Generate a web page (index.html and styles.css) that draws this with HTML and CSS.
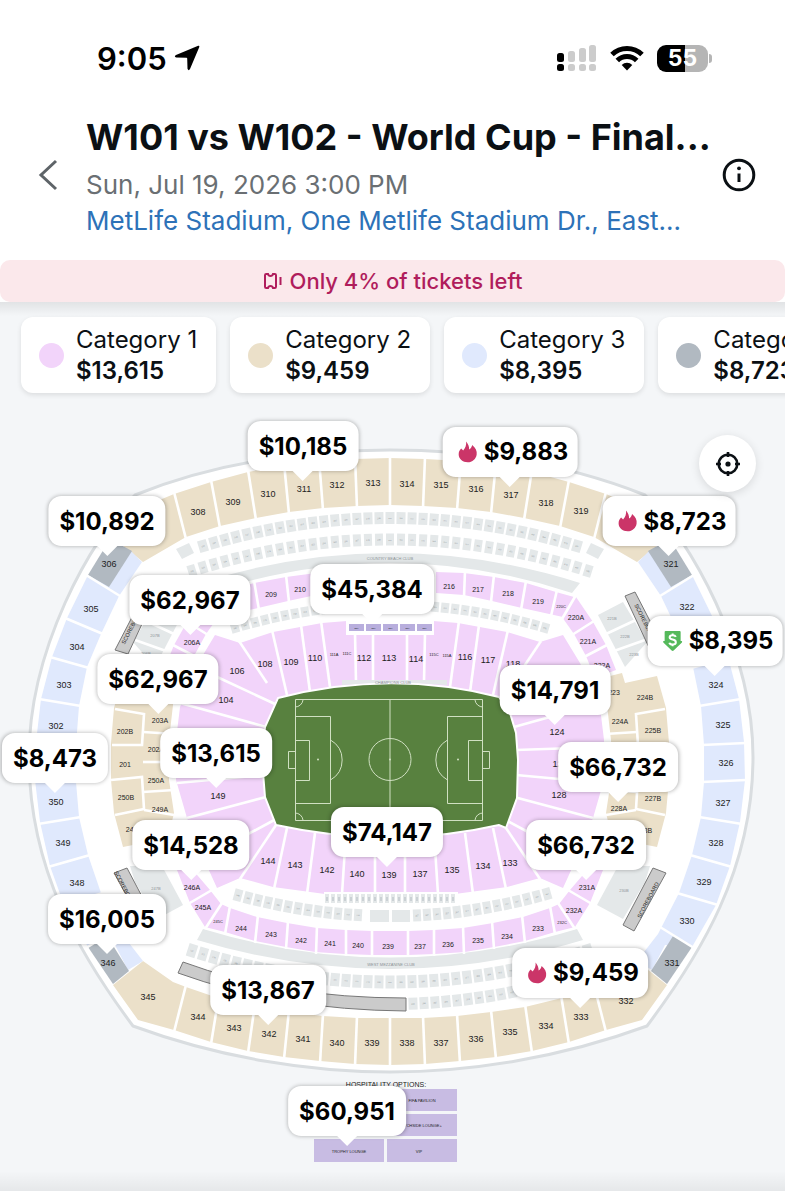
FILE: index.html
```html
<!DOCTYPE html>
<html lang="en">
<head>
  <meta charset="UTF-8">
  <meta name="viewport" content="width=device-width, initial-scale=1.0">
  <title>W101 vs W102 - World Cup - Final</title>
  <link rel="stylesheet" href="styles.css">
</head>
<body>

<div class="status-bar">
  <div class="status-time">
    <span>9:05</span>
    <svg class="icon-location" viewBox="0 0 26 26"><path d="M24.2 0.8 Q25.8 0.4 25.2 2.2 L16 24 Q14.6 26.4 13.5 23.8 L13.2 13.5 Q13.2 12.8 12.5 12.8 L2.2 12.5 Q-0.4 11.4 2 10 L24.2 0.8Z"/></svg>
  </div>
  <div class="status-icons">
    <svg class="icon-signal" viewBox="0 0 40 28">
      <g class="signal-on"><rect x="0" y="9" width="7" height="9" rx="2.5"/><rect x="0" y="20" width="7" height="7" rx="2.5"/></g>
      <g class="signal-off">
        <rect x="11" y="7" width="7" height="11" rx="2.5"/><rect x="11" y="20" width="7" height="7" rx="2.5"/>
        <rect x="22" y="4" width="7" height="14" rx="2.5"/><rect x="22" y="20" width="7" height="7" rx="2.5"/>
        <rect x="32" y="1" width="7" height="17" rx="2.5"/><rect x="32" y="20" width="7" height="7" rx="2.5"/>
      </g>
    </svg>
    <svg class="icon-wifi" viewBox="0 0 34 26">
      <path d="M2 9.5 A21.5 21.5 0 0 1 32 9.5"/>
      <path d="M7.3 15.5 A13.7 13.7 0 0 1 26.7 15.5"/>
      <path class="wifi-dot" d="M17 25.5 L11.7 20 A7.6 7.6 0 0 1 22.3 20Z"/>
    </svg>
    <div class="battery"><span>55</span></div>
  </div>
</div>

<header class="event-header">
  <button class="back-button" aria-label="Back">
    <svg viewBox="0 0 20 32"><path d="M18 2 L3 16 L18 30"/></svg>
  </button>
  <div class="event-info">
    <h1>W101 vs W102 - World Cup - Final...</h1>
    <p class="event-date">Sun, Jul 19, 2026 3:00 PM</p>
    <a class="event-venue" href="#">MetLife Stadium, One Metlife Stadium Dr., East...</a>
  </div>
  <button class="info-button" aria-label="Event info">
    <svg viewBox="0 0 34 34"><circle cx="17" cy="17" r="14.8"/><path d="M17 15.5 V24"/><circle class="info-dot" cx="17" cy="10.3" r="1.9"/></svg>
  </button>
</header>

<div class="banner">
  <svg class="icon-ticket" viewBox="0 0 20 20"><path d="M5 3 H3.2 Q2 3 2 4.2 V15.8 Q2 17 3.2 17 H5 Q5.5 15 7.5 15 T10 17 H11.8 Q13 17 13 15.8 V4.2 Q13 3 11.8 3 H10 Q9.5 5 7.5 5 T5 3Z"/><path d="M17.5 6 V14"/></svg>
  <span>Only 4% of tickets left</span>
</div>

<main>
  <div class="categories">
    <button class="category"><span class="dot dot-1"></span><span class="category-text">Category 1<b>$13,615</b></span></button>
    <button class="category"><span class="dot dot-2"></span><span class="category-text">Category 2<b>$9,459</b></span></button>
    <button class="category"><span class="dot dot-3"></span><span class="category-text">Category 3<b>$8,395</b></span></button>
    <button class="category"><span class="dot dot-4"></span><span class="category-text">Category 4<b>$8,723</b></span></button>
  </div>

  <div class="map">
    <svg class="seat-map" id="seat-map" viewBox="0 408 785 783"></svg>
    <div id="pins"></div>
    <button class="locate-button" aria-label="Recenter map">
      <svg viewBox="0 0 26 26"><circle cx="13" cy="13" r="9.3"/><path d="M13 1 V6 M13 20 V25 M1 13 H6 M20 13 H25"/><circle class="locate-dot" cx="13" cy="13" r="2.6"/></svg>
    </button>
  </div>
</main>

<div class="sheet"></div>

<script src="map.js"></script>
</body>
</html>
```
FILE: styles.css
```css
* {
  box-sizing: border-box;
}

body {
  margin: 0;
  min-height: 100vh;
  display: flex;
  flex-direction: column;
  background: #fff;
  color: #0b1014;
  font-family: Inter, "Liberation Sans", sans-serif;
  overflow-x: hidden;
}

button {
  border: 0;
  padding: 0;
  background: none;
  color: inherit;
  font: inherit;
  cursor: pointer;
}

svg {
  display: block;
}

/* Status bar */
.status-bar {
  display: flex;
  justify-content: space-between;
  align-items: center;
  padding: 38px 77px 0 97px;
  height: 78px;
  color: #000;
}

.status-time {
  display: flex;
  align-items: center;
  gap: 7px;
  font-size: 31px;
  font-weight: 600;
}

.icon-location {
  width: 26px;
  height: 26px;
}

.status-icons {
  display: flex;
  align-items: center;
  gap: 13px;
}

.icon-signal {
  width: 40px;
  height: 28px;
}

.signal-off {
  fill: #cccccc;
}

.icon-wifi {
  width: 34px;
  height: 26px;
  fill: none;
  stroke: #000;
  stroke-width: 5;
}

.icon-wifi .wifi-dot {
  fill: #000;
  stroke: none;
}

.battery {
  position: relative;
  width: 51px;
  height: 27px;
  border-radius: 9px;
  background: linear-gradient(to right, #000 55%, #b5b5b5 55%);
  color: #fff;
  font-size: 23px;
  font-weight: 700;
  line-height: 27px;
  text-align: center;
}

.battery::after {
  content: "";
  position: absolute;
  right: -4px;
  top: 9px;
  width: 3px;
  height: 9px;
  border-radius: 0 3px 3px 0;
  background: #b5b5b5;
}

/* Event header */
.event-header {
  display: flex;
  align-items: center;
  padding: 37px 29px 21px 38px;
}

.back-button,
.info-button {
  flex: none;
  padding-bottom: 4px;
}

.back-button {
  width: 48px;
}

.back-button svg {
  width: 20px;
  height: 32px;
  fill: none;
  stroke: #5e6468;
  stroke-width: 3;
}

.event-info {
  flex: 1;
  min-width: 0;
  white-space: nowrap;
}

.event-info h1 {
  margin: 0 0 8px;
  font-size: 36px;
  line-height: 44px;
  font-weight: 700;
}

.event-date {
  margin: 0;
  font-size: 26px;
  line-height: 36px;
  color: #6a6f73;
}

.event-venue {
  display: block;
  font-size: 26px;
  line-height: 36px;
  color: #2d72b8;
  text-decoration: none;
}

.info-button svg {
  width: 34px;
  height: 34px;
  fill: none;
  stroke: #0b1014;
  stroke-width: 3;
}

.info-button .info-dot {
  fill: #0b1014;
  stroke: none;
}

/* Tickets left banner */
.banner {
  display: flex;
  justify-content: center;
  align-items: center;
  gap: 7px;
  height: 42px;
  border-radius: 10px;
  background: #fbe8eb;
  color: #b01d5c;
  font-size: 22px;
  font-weight: 500;
}

.icon-ticket {
  width: 20px;
  height: 20px;
  fill: none;
  stroke: #b01d5c;
  stroke-width: 2;
}

main {
  background:
    linear-gradient(rgba(0, 0, 0, 0.08), rgba(0, 0, 0, 0)) top / 100% 14px no-repeat,
    linear-gradient(rgba(0, 0, 0, 0), rgba(0, 0, 0, 0.06)) bottom / 100% 20px no-repeat,
    #f4f6f8;
}

/* Category chips */
.categories {
  display: flex;
  gap: 14px;
  padding: 15px 0 15px 21px;
  overflow: hidden;
}

.category {
  flex: none;
  display: flex;
  align-items: center;
  gap: 12px;
  height: 76px;
  padding: 0 19px 0 18px;
  border-radius: 12px;
  background: #fff;
  box-shadow: 0 2px 5px rgba(0, 0, 0, 0.1);
  font-size: 24px;
  line-height: 31px;
  text-align: left;
}

.category b {
  display: block;
  font-weight: 600;
}

.dot {
  width: 25px;
  height: 25px;
  border-radius: 50%;
}

.dot-1 { background: #f2d4fa; }
.dot-2 { background: #ebe0c9; }
.dot-3 { background: #e0e9fd; }
.dot-4 { background: #b1b9c1; }

/* Stadium map */
.map {
  position: relative;
}

.seat-map {
  width: 100%;
  font-family: "Liberation Sans", Arial, sans-serif;
}

.outline { fill: #fff; stroke: #d9dde0; stroke-width: 3; }
.tan { fill: #ebe0c9; }
.pink { fill: #f2d4fa; }
.blue { fill: #e0e9fd; }
.slate { fill: #b1b9c1; }
.suite { fill: #e4e8e9; }
.violet { fill: #c8bce3; }
.box { fill: #b8aedd; }
.white { fill: #fff; }
.board { fill: #cbcbcb; stroke: #777; stroke-width: 1; }
.aisle { fill: none; stroke: #fff; stroke-width: 2.6; }
.grass { fill: #58813f; stroke: #fff; stroke-width: 2; }
.chalk { fill: none; stroke: #d0e0c2; stroke-width: 1; }
.spot { fill: #d0e0c2; }

.seat-map text {
  fill: #222;
  text-anchor: middle;
}

.label-l { font-size: 9px; }
.label-m { font-size: 7px; }
.label-s { font-size: 4px; }
.label-xs { font-size: 2px; }
.label-l, .label-m, .label-s { dominant-baseline: central; }

.seat-map .faint {
  fill: #8c9296;
}

/* Price pins, anchored at the tip */
.pin {
  position: absolute;
  transform: translate(-50%, -100%);
  display: flex;
  align-items: center;
  gap: 6px;
  height: 50px;
  margin-top: -10px;
  padding: 0 11px;
  border-radius: 13px;
  background: #fff;
  box-shadow: 0 0 4px rgba(0, 0, 0, 0.3);
  color: #000;
  font-size: 24px;
  font-weight: 700;
}

.pin-icon {
  padding: 0 9px 0 15px;
}

.pin::after {
  content: "";
  position: absolute;
  left: 50%;
  top: 100%;
  margin: -1px 0 0 -11px;
  border: 11px solid transparent;
  border-top-color: #fff;
  border-bottom: 0;
}

.pin svg {
  width: 20px;
  height: 22px;
}

.flame { fill: #cb3568; }
.deal { fill: #55b95b; }
.deal-mark { fill: none; stroke: #fff; stroke-width: 2; }

.locate-button {
  position: absolute;
  top: 27px;
  right: 29px;
  width: 57px;
  height: 57px;
  display: flex;
  justify-content: center;
  align-items: center;
  border-radius: 50%;
  background: #fff;
  box-shadow: 0 2px 10px rgba(0, 0, 0, 0.12);
}

.locate-button svg {
  width: 26px;
  height: 26px;
  fill: none;
  stroke: #0b1014;
  stroke-width: 2.6;
}

.locate-button .locate-dot {
  fill: #0b1014;
  stroke: none;
}

.sheet {
  flex: 1;
  min-height: 9px;
  border-radius: 14px 14px 0 0;
  background: #fff;
}
```
FILE: map.js
```js
const CENTER = 390;
const out = [];

const poly = (cls, pts) => out.push(`<polygon class="${cls}" points="${pts}"/>`);
const path = (cls, d) => out.push(`<path class="${cls}" d="${d}"/>`);
const flip = pts => pts.split(' ').map(p => {
  const [x, y] = p.split(',');
  return `${CENTER * 2 - x},${y}`;
}).join(' ');

// draw the shape and its mirror image on the other side of the halfway line
const both = (cls, pts) => {
  poly(cls, pts);
  poly(cls, flip(pts));
};
const aisle = pts => out.push(`<polyline class="aisle" points="${pts}"/>`);
const aisles = pts => {
  aisle(pts);
  aisle(flip(pts));
};

// curved row of small suites
function suites(y0, bend, from, to, step, w, h) {
  for (let dx = from; dx <= to; dx += step) {
    const y = y0 + bend * dx * dx;
    const deg = Math.atan(2 * bend * dx) * 180 / Math.PI;
    out.push(`<g transform="translate(${CENTER + dx} ${y}) rotate(${deg})">
      <rect class="suite" x="${-w / 2}" y="${-h / 2}" width="${w}" height="${h}"/>
      <text class="label-xs faint" y="1">${100 + Math.round(dx + 200)}</text></g>`);
  }
}

// stadium shell
path('outline', 'M135,495 C215,463 305,450 390,450 S565,463 645,495 C690,540 753,650 753,757 C753,870 700,955 647,1026 C560,1058 470,1072 390,1072 S220,1058 133,1026 C80,955 29,870 29,757 C29,650 90,540 135,495Z');

// 300 level
poly('tan', '122,545 150,504 174,494 211,482 248,472 284,465 319,461 355,459 390,458 425,459 461,461 496,465 532,472 569,482 606,494 630,504 658,545 637,562 594,537 560,526 524,518 491,512 457,508 423,506 390,505 357,506 323,508 289,512 256,518 220,526 186,537 143,562');
poly('tan', '113,985 143,961 173,982 186,987 218,998 255,1007 289,1012 323,1016 357,1018 390,1018 423,1018 457,1016 491,1012 525,1007 562,998 594,987 607,982 637,961 667,985 642,1020 606,1030 569,1042 532,1051 496,1057 460,1061 425,1064 390,1065 355,1064 320,1061 284,1057 248,1051 211,1042 174,1030 138,1020');
['174,492 186,539', '211,480 220,528', '248,470 256,520', '284,463 289,514', '319,459 323,510', '355,457 357,508',
 '186,985 174,1032', '219,995 211,1044', '255,1004 248,1053', '289,1010 284,1059', '323,1014 320,1063', '357,1016 355,1066'].forEach(aisles);
aisle('390,456 390,507');
aisle('390,1016 390,1067');

both('blue', '88,575 67,618 52,657 41,699 36,742 35,780 40,822 50,866 64,905 88,947 115,945 128,970 143,961 122,934 101,893 88,855 79,817 76,782 76,745 79,706 87,667 101,634 119,596 142,562 131,551 109,586');
both('slate', '88,575 109,587 132,551 110,539');
both('slate', '88,947 113,984 129,971 107,936');
['86,575 120,596', '65,618 103,634', '50,657 89,668', '39,699 81,706', '34,743 78,745', '34,780 78,782', '38,824 81,817', '48,867 90,855', '62,905 103,893', '86,948 120,927'].forEach(aisles);

// suites and clubs, north side
suites(518, 0.0008, -187, 187, 11, 9, 12);
suites(539.5, 0.0008, -198, 198, 11, 8, 12);
both('suite', '176,549 189,543 194,553 182,559');
path('suite', 'M200,583 Q390,523 580,583 L572,593 Q390,533 208,593Z');
suites(605, 0.00095, -155, -45, 10, 8, 10);
suites(605, 0.00095, 45, 155, 10, 8, 10);

// suites and clubs, south side
suites(916, -0.0009, -152, -32, 10, 8, 12);
suites(916, -0.0009, 27, 157, 10, 8, 12);
out.push('<rect class="suite" x="370" y="910" width="19" height="12"/><rect class="suite" x="392" y="910" width="18" height="12"/>');
path('suite', 'M203,929 Q390,986 577,929 L583,940 Q390,998 197,940Z');
suites(982, -0.0008, -198, 198, 11, 9, 13);
suites(1004, -0.0008, 23, 190, 11, 9, 12);
path('board', 'M183,962 Q280,998 406,998 V1011 Q280,1010 178,973Z');

// corner terraces and scoreboards
both('suite', '598,615 623,602 647,642 625,667');
aisles('606,634 638,619');
aisles('614,651 645,640');
both('suite', '597,905 623,919 645,882 650,866 618,866');
both('board', '625,596 635,592 665,650 652,654');
both('board', '653,868 666,873 634,931 623,925');

// 200 level
both('pink', '576,597 593,622 606,645 616,670 595,678 586,656 574,634 562,617');
both('pink', '436,572 464,573 494,577 526,583 556,592 574,597 563,617 522,608 492,601 464,595 436,593');
both('pink', '177,870 186,862 210,890 221,904 230,908 257,917 287,923 317,928 346,930 372,931 390,931 390,955 372,955 345,954 315,952 286,947 255,941 225,932 205,927 190,903');
['465,571 464,597', '494,575 491,602', '526,581 521,610', '557,590 551,616', '576,595 562,619', '594,621 572,635', '607,645 584,657',
 '188,904 212,890', '222,903 205,929', '230,906 225,934', '258,915 255,943', '288,921 286,949', '317,926 316,954', '346,928 346,956', '372,929 372,957'].forEach(aisles);

both('tan', '606,677 622,673 625,683 657,676 666,708 669,743 669,780 666,813 657,847 612,838 606,813 611,780 611,740 607,705');
['115,709 144,714 142,745 112,745', '143,732 175,734', '143,762 175,762', '111,780 142,777 144,809 115,815', '143,792 174,790', '144,810 174,815'].forEach(aisles);

// 100 level
poly('pink', '240,643 273,632 322,623 347,621 433,621 458,623 507,632 540,642 563,635 580,663 600,707 604,740 604,780 593,818 578,855 563,888 540,878 507,887 455,894 325,894 273,887 240,878 217,888 202,855 187,818 176,780 176,740 180,707 200,660 215,635');
['239,641 267,683', '215,676 275,704', '180,703 266,727', '272,630 287,695', '301,625 310,692', '321,621 330,687', '355,633 356,682', '373,633 373,682',
 '176,747 264,750', '177,783 264,775', '187,818 266,797', '200,860 278,818', '240,879 278,822', '274,889 287,828', '307,894 315,833', '342,894 346,833', '375,894 375,833'].forEach(aisles);
out.push('<rect class="white" x="346" y="621" width="88" height="14"/><rect class="white" x="324" y="892" width="134" height="14"/>');
for (let i = 0; i < 5; i++) {
  out.push(`<rect class="box" x="${349 + i * 17}" y="624" width="15" height="7"/><text class="label-xs" x="${356.5 + i * 17}" y="628.5">BOX</text>`);
}
for (let i = 0; i < 22; i++) {
  out.push(`<rect class="suite" x="${325 + i * 6}" y="894" width="4" height="9"/><rect class="slate" x="${326.5 + i * 6}" y="897" width="1" height="4"/>`);
}

// pitch
path('grass', 'M278,698 Q390,669 499,697 L510,713 516,733 518,760 517,798 506,828 499,825 Q390,850 276,825 L265,797 262,760 265,727Z');
path('suite', 'M342,680 H447 V685 Q390,680 342,685Z');
path('chalk', 'M295.5,699.5 H482.5 V820.5 H295.5Z M390,699 V820 M295.5,716.5 H330.5 V803.5 H295.5 M482.5,716.5 H447.5 V803.5 H482.5 M295.5,740.5 H309.5 V780.5 H295.5 M482.5,740.5 H468.5 V780.5 H482.5 M295.5,751.5 H288.5 V768.5 H295.5 M482.5,751.5 H489.5 V768.5 H482.5 M330.5,740 A23,23 0 0 1 330.5,780 M447.5,740 A23,23 0 0 0 447.5,780 M303,700 A8,8 0 0 1 295,707 M475,700 A8,8 0 0 0 483,707 M303,820 A8,8 0 0 0 295,813 M475,820 A8,8 0 0 1 483,813');
out.push('<circle class="chalk" cx="390" cy="759.5" r="21"/>');
[318, 390, 458].forEach(x => out.push(`<circle class="spot" cx="${x}" cy="759.5" r="1"/>`));

// hospitality blocks
out.push('<rect class="violet" x="387" y="1089" width="70" height="22"/><rect class="violet" x="387" y="1114" width="70" height="22"/><rect class="violet" x="314" y="1139" width="70" height="23"/><rect class="violet" x="387" y="1139" width="70" height="23"/>');

const labels = {
  'label-l': [
    [308, 198, 512], [309, 233, 502], [310, 268, 494], [311, 304, 489], [312, 337, 485], [313, 373, 483], [314, 407, 484],
    [315, 441, 485], [316, 476, 489], [317, 511, 495], [318, 546, 503], [319, 581, 511], [306, 109, 564], [305, 91, 609],
    [304, 77, 647], [303, 64, 685], [302, 56, 726], [350, 56, 802], [349, 63, 843], [348, 77, 883], [346, 108, 963],
    [321, 671, 564], [322, 687, 607], [324, 716, 685], [325, 723, 725], [326, 726, 763], [327, 723, 803], [328, 716, 843],
    [329, 704, 882], [330, 687, 921], [331, 672, 963], [345, 148, 997], [344, 198, 1017], [343, 234, 1028], [342, 269, 1034],
    [341, 303, 1039], [340, 337, 1043], [339, 372, 1043], [338, 407, 1043], [337, 441, 1043], [336, 476, 1039],
    [335, 510, 1032], [334, 546, 1026], [333, 581, 1017], [332, 626, 1001], [104, 226, 700], [106, 237, 671],
    [108, 265, 664], [109, 291, 662], [110, 315, 658], [112, 364, 658], [113, 389, 658], [114, 416, 659], [116, 465, 657],
    [117, 488, 660], [118, 513, 664], [124, 557, 732], [126, 560, 764], [128, 559, 795], [149, 218, 796], [144, 268, 861],
    [143, 295, 865], [142, 327, 870], [140, 357, 874], [139, 389, 875], [137, 420, 874], [135, 452, 870], [134, 483, 866], [133, 510, 863]
  ],
  'label-m': [
    [209, 271, 594], [210, 300, 589], [216, 449, 586], [217, 478, 589], [218, 508, 593], [219, 538, 601], ['220A', 576, 617],
    ['221A', 588, 641], ['222A', 602, 665], ['206A', 192, 642], ['203A', 160, 720], ['202B', 125, 731], ['202A', 156, 749],
    [201, 125, 764], ['250A', 156, 780], ['250B', 126, 797], ['249A', 160, 809], ['249B', 134, 829], [223, 614, 692],
    ['224B', 645, 697], ['224A', 620, 721], ['225B', 653, 730], ['227B', 653, 798], ['228A', 619, 808], ['228B', 644, 830],
    ['246A', 192, 887], ['245A', 203, 907], [244, 241, 928], [243, 271, 934], [242, 301, 940], [241, 330, 943], [240, 358, 945],
    [239, 388, 946], [237, 420, 946], [236, 448, 944], [235, 478, 940], [234, 507, 936], [233, 538, 928], ['232A', 574, 910],
    ['231A', 587, 887], ['HOSPITALITY OPTIONS:', 386, 1084]
  ],
  'label-s': [
    ['220C', 561, 606], ['111A', 334, 654], ['111C', 347, 653], ['115C', 434, 654], ['115A', 447, 655], ['245C', 218, 921],
    ['232C', 562, 922], ['FIFA PAVILION', 422, 1100], ['PITCHSIDE LOUNGE+', 421, 1125], ['TROPHY LOUNGE', 349, 1151], ['VIP', 419, 1151]
  ],
  'label-s faint': [
    ['COUNTRY BEACH CLUB', 390, 558], ['WEST MEZZANINE CLUB', 391, 964], ['CHAMPIONS CLUB', 393, 682],
    ['221B', 612, 618], ['222B', 625, 636], ['223B', 634, 654], ['207B', 155, 635], ['206B', 146, 653], ['230B', 624, 890], ['247B', 156, 888]
  ]
};
for (const cls in labels) {
  labels[cls].forEach(([t, x, y]) => out.push(`<text class="${cls}" x="${x}" y="${y}">${t}</text>`));
}
[[648, 900, -62], [645, 622, 63], [132, 626, -63], [125, 889, 62]].forEach(([x, y, deg]) =>
  out.push(`<text class="label-s" transform="translate(${x} ${y}) rotate(${deg}) scale(1.4)">SCOREBOARD</text>`));

document.getElementById('seat-map').innerHTML = out.join('');

// price, tip x, tip y, icon
const pins = [
  ['$10,185', 303, 481], ['$9,883', 510, 487, 'hot'], ['$10,892', 107, 556], ['$8,723', 669, 556, 'hot'],
  ['$45,384', 372, 624], ['$62,967', 190, 635], ['$8,395', 715, 676, 'deal'], ['$62,967', 158, 714],
  ['$14,791', 555, 725], ['$8,473', 55, 793], ['$13,615', 216, 788], ['$66,732', 618, 802], ['$74,147', 387, 867],
  ['$14,528', 191, 880], ['$66,732', 586, 880], ['$16,005', 107, 954], ['$9,459', 580, 1008, 'hot'],
  ['$13,867', 268, 1025], ['$60,951', 347, 1146]
];
const icons = {
  hot: '<svg viewBox="0 0 20 22"><path class="flame" d="M8.5 0.5 C10.5 3 11.5 5.5 11.5 8.5 C13 7.5 14 6 14.5 4 C18 7 19.5 10 19 13.5 C18.4 18 14.8 21.3 10 21.3 C5 21.3 1 18 1 13.3 C1 10.8 2 9 3.5 7.5 L5.5 9.5 C7.8 7 8.8 4 8.5 0.5Z"/></svg>',
  deal: '<svg viewBox="0 0 20 22"><path class="deal" d="M3 1 H17 Q18 1 18 2 V11 H19 Q20 11.5 19.3 12.4 L11 20.6 Q10 21.5 9 20.6 L0.7 12.4 Q0 11.5 1 11 H2 V2 Q2 1 3 1Z"/><path class="deal-mark" d="M13.2 6.8 Q12.5 5.2 10 5.2 Q7 5.2 7 7.3 Q7 9 10 9.6 Q13.2 10.2 13.2 12.2 Q13.2 14.5 10 14.5 Q7.2 14.5 6.7 12.7 M10 3.4 V5.4 M10 14.3 V16.2"/></svg>'
};
document.getElementById('pins').innerHTML = pins.map(([price, x, y, icon]) =>
  `<button class="pin${icon ? ' pin-icon' : ''}" style="left:${x / 785 * 100}%;top:${(y - 408) / 783 * 100}%">${icon ? icons[icon] : ''}${price}</button>`
).join('');
```
